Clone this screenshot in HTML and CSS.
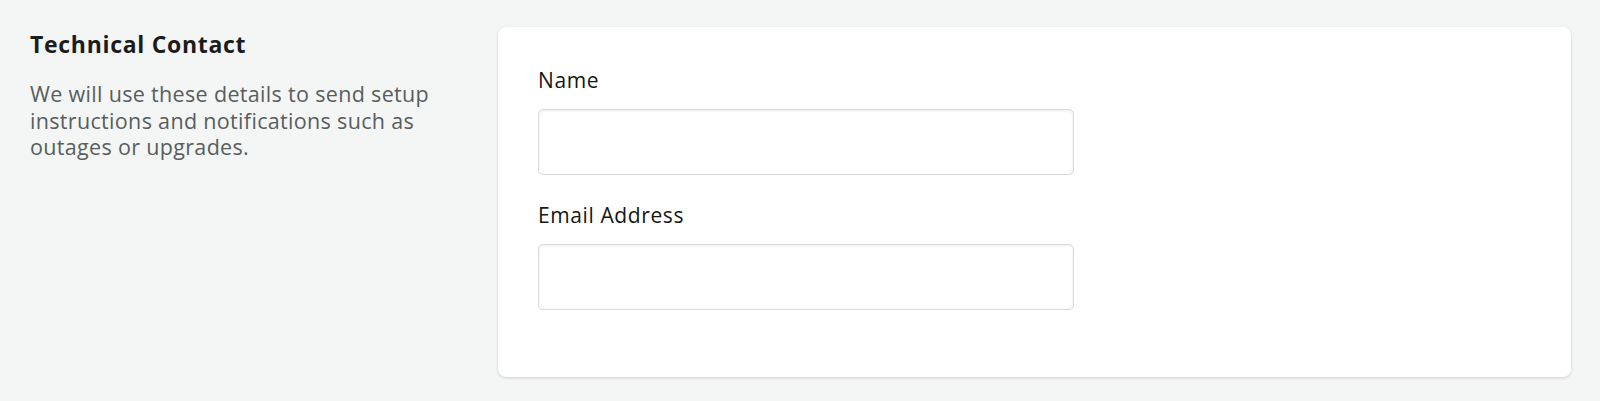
FILE: index.html
```html
<!DOCTYPE html>
<html>
<head>
<meta charset="utf-8">
<link rel="stylesheet" href="styles.css">
</head>
<body>
<div class="page">
  <section class="intro">
    <h2 class="title">Technical Contact</h2>
    <p class="desc">We will use these details to send setup instructions and notifications such as outages or upgrades.</p>
  </section>
  <section class="card">
    <div class="field">
      <label class="label">Name</label>
      <input class="input" type="text">
    </div>
    <div class="field">
      <label class="label">Email Address</label>
      <input class="input" type="email">
    </div>
  </section>
</div>
</body>
</html>
```
FILE: styles.css
```css
html, body {
  margin: 0;
  padding: 0;
  background: #f4f6f5;
}
body {
  font-family: "Open Sans", "Liberation Sans", sans-serif;
  height: 401px;
  overflow: hidden;
}
.page {
  display: flex;
  padding: 27px 29px 0 30px;
}
.intro {
  width: 468px;
  flex: none;
}
.title {
  margin: 0;
  font-size: 23px;
  line-height: 34px;
  font-weight: 700;
  letter-spacing: 0.7px;
  color: #1b1c1c;
}
.desc {
  margin: 20px 0 0;
  width: 418px;
  font-size: 21.5px;
  line-height: 26.5px;
  letter-spacing: 0.33px;
  color: #585d5d;
}
.card {
  flex: 1;
  background: #fff;
  border-radius: 8px;
  box-shadow: 0 1px 3px rgba(0, 0, 0, 0.16);
  padding: 40px 40px 41px;
  height: 350px;
  box-sizing: border-box;
}
.field {
  display: flex;
  flex-direction: column;
  margin-bottom: 27px;
}
.label {
  font-size: 21px;
  line-height: 27px;
  letter-spacing: 0.6px;
  color: #151616;
  margin-bottom: 15px;
}
.input {
  width: 536px;
  height: 66px;
  box-sizing: border-box;
  border: 1px solid #dadada;
  border-radius: 5px;
  background: #fff;
  box-shadow: inset 0 1px 3px rgba(0, 0, 0, 0.08);
  margin: 0;
  padding: 0 16px;
  font: inherit;
}
```
